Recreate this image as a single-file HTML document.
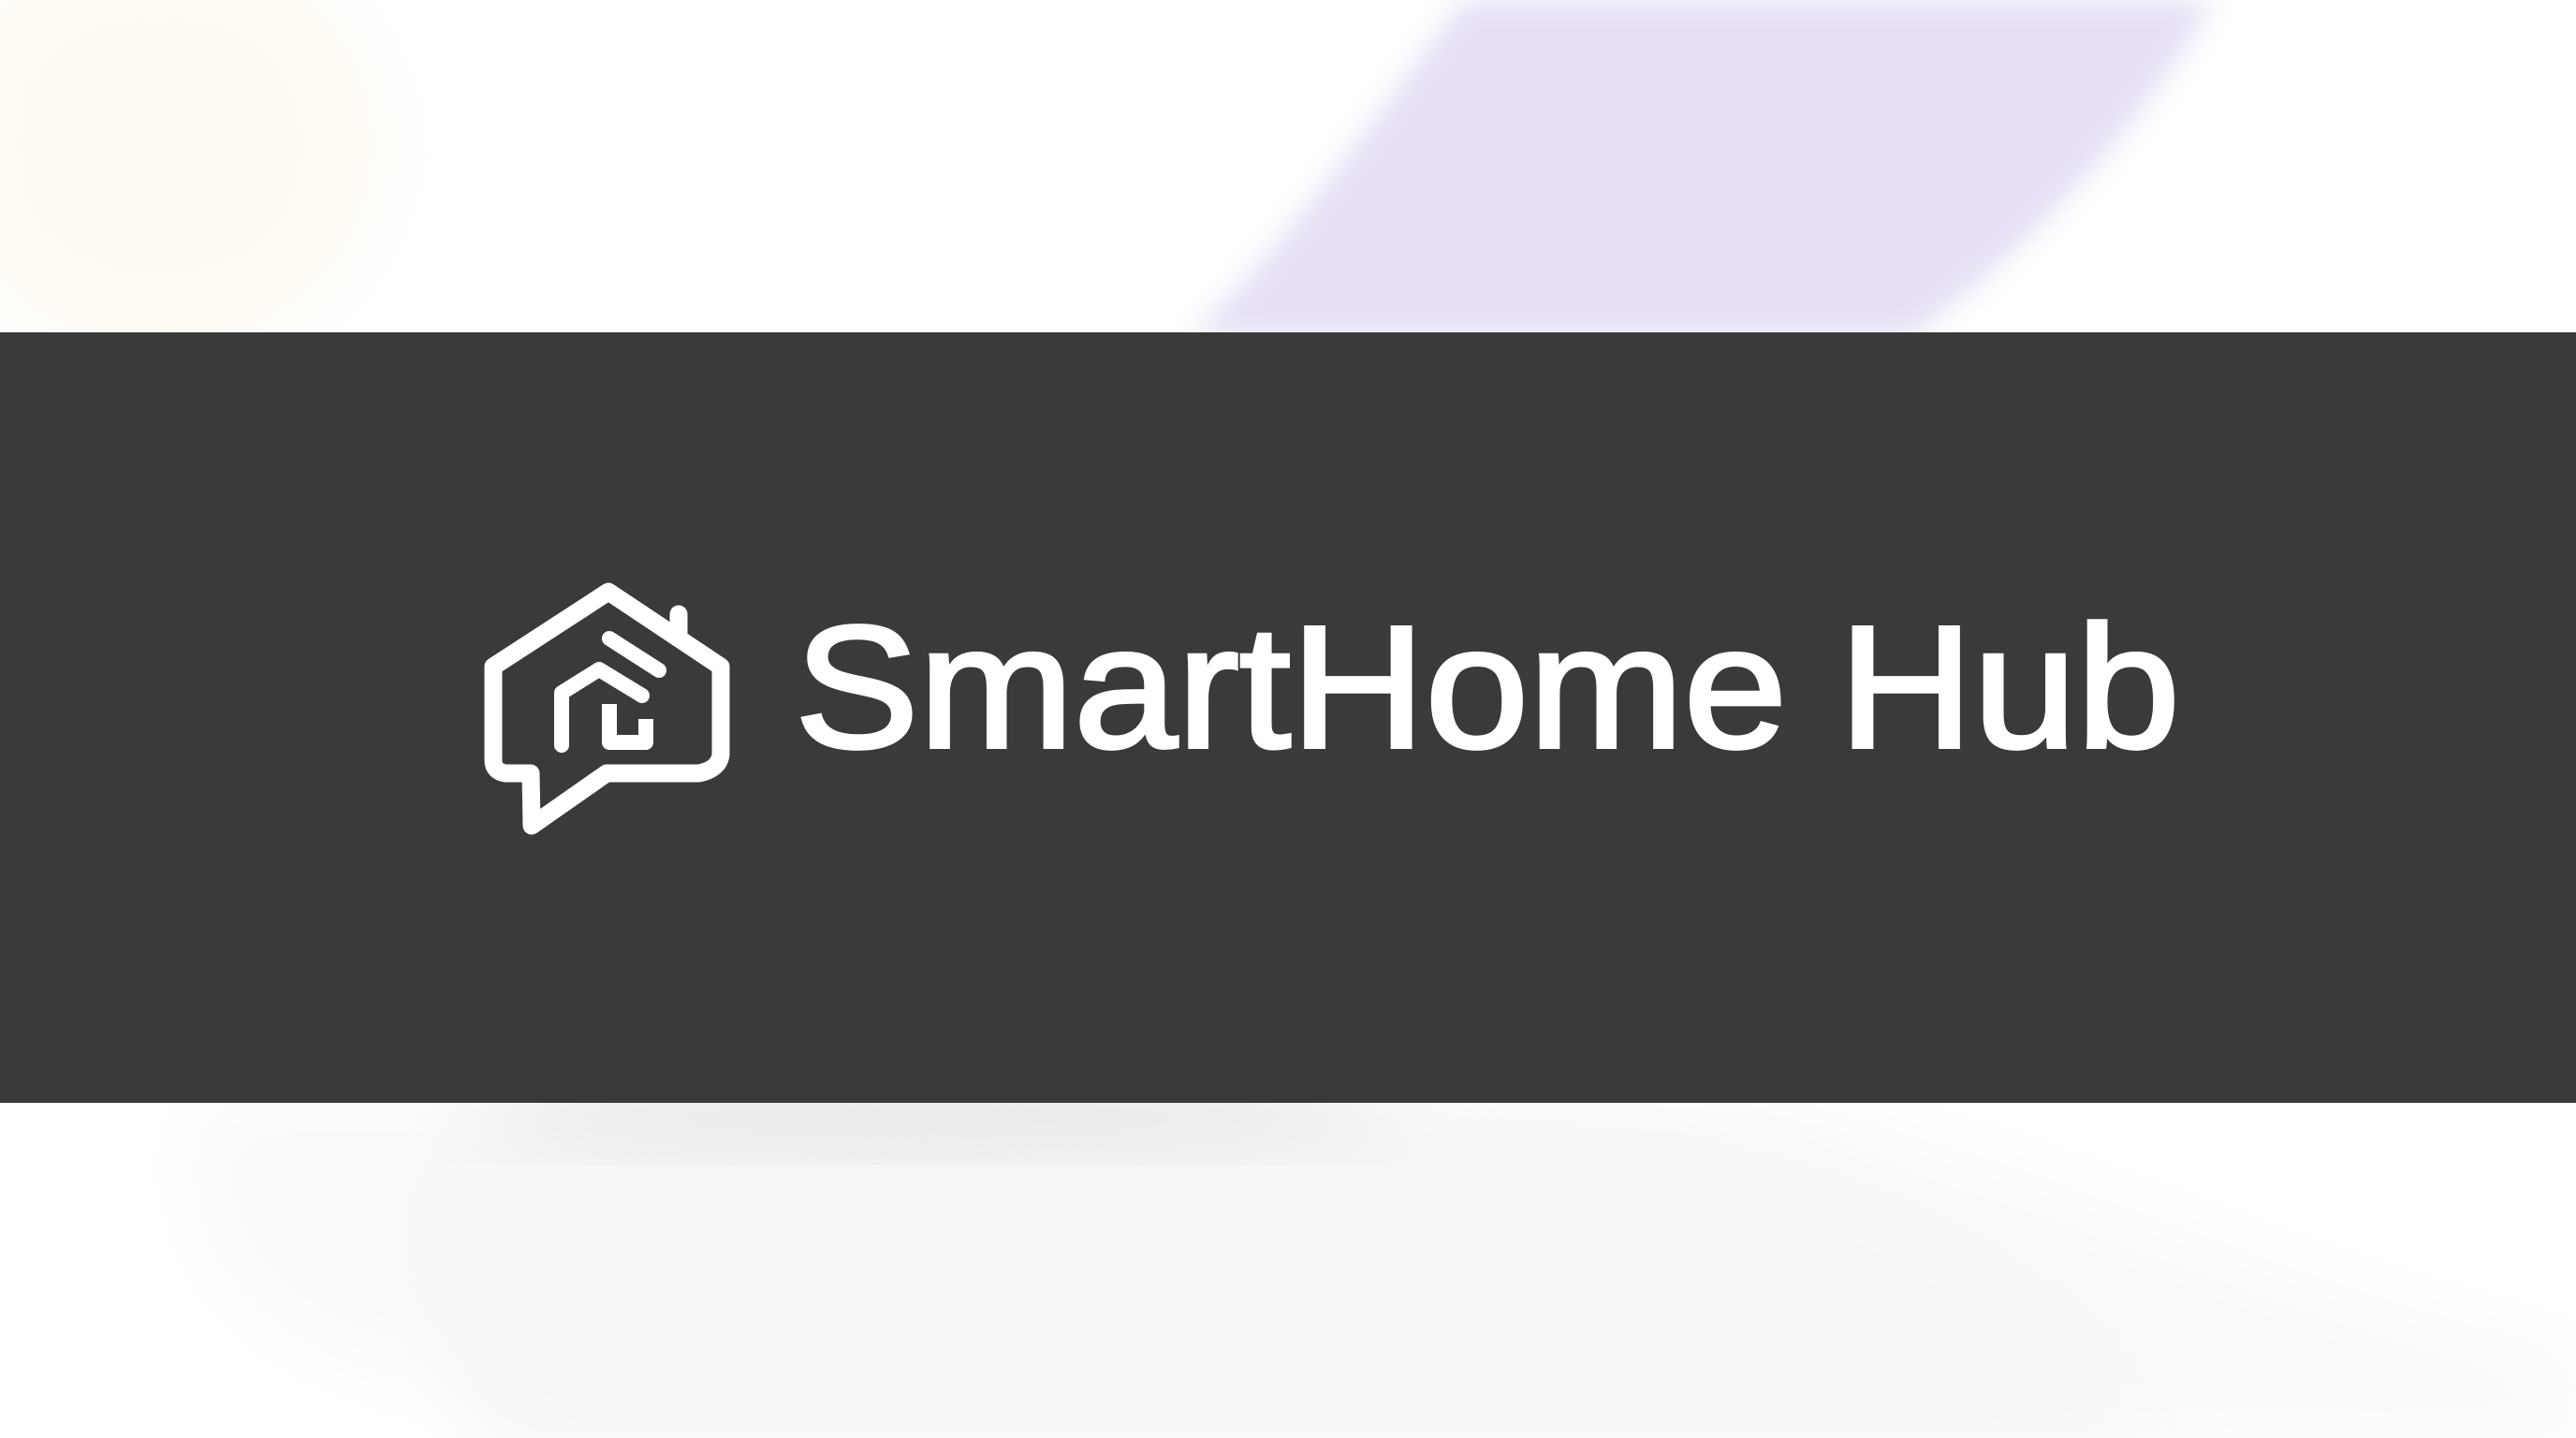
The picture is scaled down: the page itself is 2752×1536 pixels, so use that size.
<!DOCTYPE html>
<html><head><style>
html,body{margin:0;padding:0;width:2752px;height:1536px;overflow:hidden;background:#fff}
.b{position:absolute;filter:blur(40px)}
</style></head><body>
<div class="b" style="left:-60px;top:-60px;width:460px;height:430px;border-radius:50%;background:#fffaf1"></div>
<svg width="2752" height="1536" style="position:absolute;left:0;top:0">
<defs><filter id="f"><feGaussianBlur stdDeviation="15"/></filter><filter id="g"><feGaussianBlur stdDeviation="40"/></filter></defs>
<path d="M1565 0 L2365 0 C2280 150 2150 280 2040 360 L1270 360 C1380 260 1470 120 1565 0Z" fill="#e6dff5" filter="url(#f)"/>
<path d="M220 1178 C180 1350 300 1460 520 1480 L520 1536 L2752 1536 L2752 1450 C2500 1400 2300 1300 2100 1240 L1900 1178Z" fill="#f8f9f9" filter="url(#g)"/>
<path d="M500 1178 C470 1300 480 1450 520 1536 L2300 1536 C2200 1400 2000 1250 1700 1200Z" fill="#f5f6f6" filter="url(#g)"/>
<ellipse cx="1000" cy="1190" rx="500" ry="45" fill="#e8e8e8" filter="url(#g)"/>
<rect x="0" y="355" width="2752" height="823" fill="#3a3a3a"/>
<g fill="none" stroke="#fff" stroke-width="19" stroke-linejoin="round" stroke-linecap="round">
<path d="M650 632 L527 712 L527 812 Q527 824 540 826 L567 826 L568 882 L648 826 L746 826 Q768 822 770 806 L770 712 Z"/>
<path d="M725 676 L725 656"/>
<g stroke-width="16">
<path d="M600 796 L600 740 L640 715 L686 743"/>
<path d="M651 752 L651 793 L690 793 L690 768" stroke-linecap="butt"/>
<path d="M651 682 L704 716"/>
</g>
</g>
<text x="849" y="798" font-family="Liberation Sans, sans-serif" font-size="186" fill="#fff" stroke="#fff" stroke-width="4" textLength="1480" lengthAdjust="spacingAndGlyphs">SmartHome Hub</text>
</svg>
</body></html>
